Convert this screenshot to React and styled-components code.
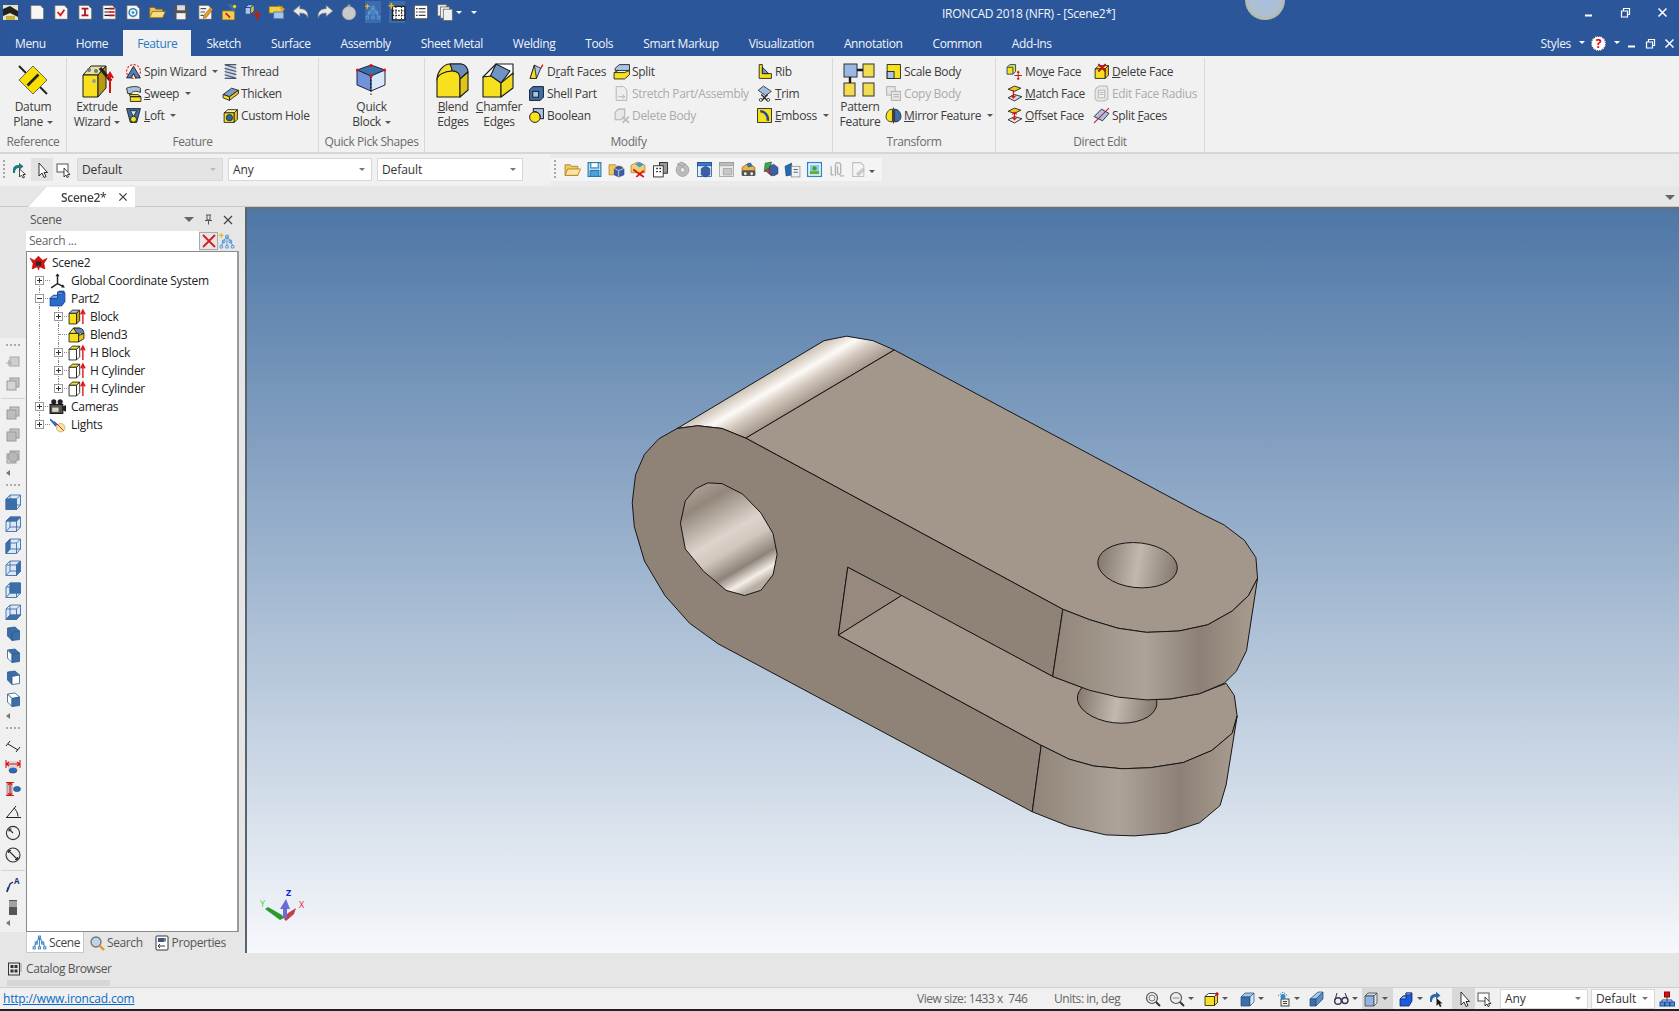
import React from "react";
import styled, { createGlobalStyle } from "styled-components";

const Global = createGlobalStyle`
  html, body { margin: 0; padding: 0; background: #e6e6e6; overflow: hidden; }
  #root { width: 1679px; height: 1011px; }
  * { box-sizing: border-box; }
`;

const font = `"Open Sans", "Noto Sans", "Liberation Sans", sans-serif`;
const Y = "#f7e11e", B = "#3c6ea8", LB = "#a9c4e6", K = "#1a1a1a", R = "#e01010", W = "#ffffff";

/* ---------- icon drawings ---------- */
const Cube = ({ f = Y, t = W, s = Y, st = K }) => (
  <g stroke={st} strokeWidth=".8" strokeLinejoin="round">
    <path d="M2 5.5 5.5 2.5H14.5L11.5 5.5Z" fill={t} />
    <path d="M2 5.5H11.5V14.5H2Z" fill={f} />
    <path d="M11.5 5.5 14.5 2.5V11.5L11.5 14.5Z" fill={s} />
  </g>
);
const Doc = ({ children, f = "#f6f6f6" }) => (
  <g>
    <path d="M2.5 2H11L14 5V14.5H2.5Z" fill={f} stroke="#555" strokeWidth=".7" />
    {children}
  </g>
);
const WireCube = ({ face }) => (
  <g stroke={B} strokeWidth=".9" strokeLinejoin="round">
    <path d="M1 5 5 1H15.5V11L11.5 15.5H1Z" fill="#dce8f6" />
    {face === "back" && <path d="M5 1H15.5V11H5Z" fill={B} />}
    {face === "bottom" && <path d="M1 15.5 5 11H15.5L11.5 15.5Z" fill={B} />}
    {face === "front" && <path d="M1 5H11.5V15.5H1Z" fill={B} />}
    {face === "top" && <path d="M1 5 5 1H15.5L11.5 5Z" fill={B} />}
    {face === "left" && <path d="M1 5 5 1V11L1 15.5Z" fill={B} />}
    {face === "right" && <path d="M11.5 5 15.5 1V11L11.5 15.5Z" fill={B} />}
    <path d="M1 5H11.5L15.5 1M11.5 5V15.5M5 1V11H15.5M5 11 1 15.5" fill="none" />
  </g>
);
const TiltCube = ({ a = B, b = B, c = B }) => (
  <g stroke="#2a5a90" strokeWidth=".8" strokeLinejoin="round">
    <path d="M2.5 2 10 1 14.5 5 7 6.5Z" fill={a} />
    <path d="M2.5 2V10L7 14.5V6.5Z" fill={b} />
    <path d="M7 6.5 14.5 5V13.5L7 14.5Z" fill={c} />
  </g>
);
const Gray = ({ d = 0 }) => (
  <g stroke="#9a9a9a" strokeWidth="1" fill="#c4c4c4">
    <rect x="5" y="2" width="9" height="9" />
    <rect x="2" y="5" width="9" height="9" fill={d ? "#d4d4d4" : "#bdbdbd"} />
    {d === 2 && <circle cx="8" cy="8" r="5" fill="#b8b8b8" />}
  </g>
);
const RedUp = () => <path d="M14 15V4M12 6l2-4 2 4" stroke={R} strokeWidth="1.3" fill="none" />;

const icons = {
  logo: <g><rect x="1" y="1" width="15" height="15" fill="#e8e2c0" /><path d="M1 5 8 2 16 7V13L8 9 1 12Z" fill="#222" /><path d="M4 12H13V16H4Z" fill="#c6b23a" /></g>,
  new: <Doc />,
  docCheck: <Doc><path d="M5 8l2.5 3L11 6" stroke={R} strokeWidth="1.6" fill="none" /></Doc>,
  docI: <Doc><path d="M5 5H11M8 5V11M5 11H11" stroke="#b01020" strokeWidth="1.6" fill="none" /></Doc>,
  docList: <Doc><path d="M4 5H8M4 8H8M4 11H8" stroke="#222" /><path d="M8 5H13M8 8H13M8 11H13" stroke="#b01020" strokeWidth="1.5" /></Doc>,
  docSwirl: <Doc><circle cx="8" cy="8.5" r="3.4" fill="none" stroke="#2f8cc0" strokeWidth="1.5" /><circle cx="8" cy="8.5" r="1.2" fill="#2f8cc0" /></Doc>,
  open: <g stroke="#8a6a10" strokeWidth=".7"><path d="M1.5 4H6L7 5.5H13V13H1.5Z" fill="#e9c45a" /><path d="M1.5 13 4 7.5H15.5L13 13Z" fill="#f8dc84" /></g>,
  save: <g><rect x="2" y="1.5" width="12" height="13" rx="1" fill="#555" /><rect x="4.5" y="2" width="7" height="4.5" fill="#ddd" /><rect x="4" y="9" width="8" height="5.5" fill="#f2f2f2" /></g>,
  editDoc: <Doc><path d="M4 5H9M4 8H8M4 11H7" stroke="#555" /><path d="M7 11 13 4l2 1.5L9 13 6.5 13.5Z" fill="#e8a020" stroke="#7a5010" strokeWidth=".5" /></Doc>,
  folderStar: <g><path d="M2 7H13V15H2Z" fill="#f0d050" stroke="#8a6a10" strokeWidth=".6" /><path d="M7 1 12 8 14 5 11 1Z" fill={B} /><path d="M5 9 9 13" stroke={R} strokeWidth="1.4" /><circle cx="13" cy="3" r="1.5" fill="#ffd000" /></g>,
  moveRed: <g><path d="M1 4 4 1.5H9L6 4ZM1 4H6V10H1Z" fill={LB} stroke="#1e4a90" strokeWidth=".8" /><path d="M6 4 9 1.5V7L6 10Z" fill="#f2c830" stroke="#1e4a90" strokeWidth=".8" /><path d="M11.5 7V15M7.5 11H15.5" stroke="#c02010" strokeWidth="1.6" /></g>,
  folderBlue: <g><path d="M1 3H13V9H1Z" fill="#f0d040" stroke="#8a7010" strokeWidth=".6" /><path d="M5 8H14V14H5Z" fill={LB} stroke={B} strokeWidth=".7" /><path d="M9 2 15 5 13 8Z" fill="#e8a020" /></g>,
  undo: <path d="M1 7 7 2V5C12 5 15 8 14 13 13 10 11 9 7 9V12Z" fill="#e8e8e8" stroke="#777" strokeWidth=".7" />,
  redo: <path d="M15 7 9 2V5C4 5 1 8 2 13 3 10 5 9 9 9V12Z" fill="#e8e8e8" stroke="#777" strokeWidth=".7" />,
  ball: <g><circle cx="8" cy="9" r="6" fill="#c9c9c9" stroke="#999" strokeWidth=".6" /><path d="M6 3 8 .8 10 3Z" fill="#aaa" /></g>,
  tree: <g fill="none" stroke="#5a9ad8" strokeWidth=".9"><path d="M8 4 5 8 3 12M8 4l3 4 2 4M8 4V12" /><circle cx="8" cy="4" r="1.3" /><circle cx="5" cy="8.5" r="1.3" /><circle cx="11" cy="8.5" r="1.3" /><circle cx="3" cy="13" r="1.3" /><circle cx="8" cy="13" r="1.3" /><circle cx="13" cy="13" r="1.3" /><path d="M3 1V5M1 3H5" stroke="#e8b820" strokeWidth="1.2" /></g>,
  film: <g><rect x="4" y="3" width="11" height="12" fill={W} stroke="#222" strokeWidth="1.2" /><path d="M7 3V15M12 3V15M4 7H15M4 11H15" stroke="#222" strokeDasharray="1.5 1" /><path d="M3 0V5M.5 2.5H5.5" stroke="#e8b820" strokeWidth="1.3" /></g>,
  listDoc: <g><rect x="2" y="2" width="12" height="12" rx="1" fill={W} stroke="#555" /><path d="M6 5H12M6 8H12M6 11H12M3.5 5H5M3.5 8H5M3.5 11H5" stroke="#444" /></g>,
  copies: <g stroke="#666" strokeWidth=".7" fill="#f0f0f0"><rect x="1.5" y="1.5" width="8" height="10" /><rect x="4" y="3.5" width="8" height="10" /><rect x="6.5" y="5.5" width="8" height="10" /></g>,

  spin: <g><circle cx="8" cy="8" r="6.5" fill="none" stroke={R} strokeDasharray="2 1.4" /><path d="M1.5 14 8 3l6.5 11H10L8 10 6 14Z" fill="#5a7db0" stroke={K} strokeWidth=".8" /></g>,
  sweep: <g stroke={K} strokeWidth=".8"><path d="M1.5 3C6 1 13 1 14.5 3V7C10 5 7 6 6 8H2.5Z" fill="#a8c0dd" /><path d="M4 9H12L15 11H5ZM5 11H15V15.5H5Z" fill={Y} /></g>,
  loft: <g stroke={K} strokeWidth=".8"><path d="M1.5 1.5H14.5L11 14.5H5Z" fill={B} /><path d="M5 3.5 8 9 11 3.5Z" fill="#dce8f6" /><circle cx="8" cy="11.5" r="2.8" fill={Y} /></g>,
  thread: <g stroke="#4c5870" strokeWidth="1.1" fill="none"><rect x="3" y="2" width="10" height="12" fill="#cdd6e0" stroke="none" /><path d="M2.5 1.5H13.5M2.5 1.5 13.5 5M2.5 5 13.5 8M2.5 8 13.5 11M2.5 11 13.5 14.5M2.5 14.5H13.5" /></g>,
  thicken: <g stroke={K} strokeWidth=".8"><path d="M1 9 9 3 15.5 5 7 11Z" fill="#7b9cc4" /><path d="M1 9 7 11V14.5L1 12Z" fill={Y} /><path d="M7 11 15.5 5V8L7 14.5Z" fill="#e8c820" /></g>,
  hole: <g><Cube f={Y} t="#fff2a0" s="#e8c820" /><circle cx="7" cy="10" r="3" fill="#2a66a8" stroke={K} strokeWidth=".7" /></g>,
  draft: <g stroke={K} strokeWidth=".8"><path d="M6 2 12 5 8 14.5H2Z" fill={LB} /><path d="M2 14.5 6 2 8 14.5Z" fill={Y} /><path d="M12 5 14 1.5" stroke={R} strokeWidth="1.2" /></g>,
  shell: <g stroke={K} strokeWidth=".9"><path d="M1.5 4.5 4.5 1.5H14.5V11.5L11.5 14.5H1.5Z" fill={B} /><rect x="4.5" y="6" width="5.5" height="5.5" fill={LB} /></g>,
  bool: <g stroke={K} strokeWidth=".9"><rect x="5" y="1.5" width="9.5" height="9.5" fill={LB} /><circle cx="6.5" cy="9.5" r="5" fill={Y} /><path d="M5.5 4.5A5 5 0 0 1 11.5 9.5" fill="none" /></g>,
  split: <g stroke={K} strokeWidth=".8"><path d="M2 5 6 1.5H15.5V7H2Z" fill={LB} /><path d="M1 9H11L15.5 7V11L11 15H1Z" fill={Y} /><path d="M1 9 5 7" /></g>,
  stretch: <g stroke="#b4b4b4" strokeWidth=".9" fill="#eee"><path d="M3 1.5H10L13 4.5V14.5H3Z" /><path d="M5 11H11M9 9l2 2-2 2" fill="none" /></g>,
  delBody: <g stroke="#b4b4b4" fill="#e8e8e8"><path d="M2 5 5 2H11V9L8 12H2Z" /><path d="M9 9 15 15M15 9 9 15" stroke="#bbb" strokeWidth="1.6" /></g>,
  rib: <g stroke={K} strokeWidth=".8"><path d="M3 1.5H6V10H14.5V14.5H3Z" fill={Y} /><path d="M6 4 12 10H6Z" fill="#6f92bf" /></g>,
  trim: <g stroke={K} strokeWidth=".7"><path d="M2 5 7 1 14.5 6 9 10Z" fill="#9fbde2" /><path d="M5 9 11 15M11 9 5 15" stroke="#222" strokeWidth="1.2" /><circle cx="4.5" cy="14" r="1.4" fill="#eee" /><circle cx="11.5" cy="14" r="1.4" fill="#eee" /></g>,
  emboss: <g stroke={K} strokeWidth=".8"><rect x="1.5" y="1.5" width="13" height="13" fill={Y} /><path d="M4 4C8 4 12 8 11 13" stroke="#1e4a90" strokeWidth="2.4" fill="none" /></g>,
  scale: <g stroke={K} strokeWidth=".8"><rect x="2" y="1.5" width="12.5" height="13" fill={Y} /><rect x="2" y="8" width="6.5" height="6.5" fill={LB} /></g>,
  copyBody: <g stroke="#b4b4b4" fill="#e6e6e6"><rect x="1.5" y="1.5" width="8" height="8" /><rect x="6" y="6" width="8.5" height="8.5" /><path d="M8 9H13M8 11H13" /></g>,
  mirror: <g stroke={K} strokeWidth=".8"><path d="M7 2C3 2 1 6 1 9 1 12 3 14 7 14Z" fill={Y} /><path d="M9 2C13 2 15 6 15 9 15 12 13 14 9 14Z" fill={B} /><path d="M8 .5V15.5" stroke="#222" /></g>,
  moveF: <g><path d="M1 4 3.5 1.5H9V8L6.5 10.5H1Z" fill={Y} stroke="#1e4a90" strokeWidth=".9" /><path d="M1 4H6.5V10.5" fill="none" stroke="#1e4a90" strokeWidth=".9" /><path d="M11.5 8V15.5M8 11.7H15M10.5 9l1-1.2 1 1.2M10.5 14.5l1 1 1-1" stroke="#c02010" fill="none" strokeWidth="1" /></g>,
  matchF: <g stroke={K} strokeWidth=".8"><path d="M2 4 8 1 14 3 8 6Z" fill="#f0c820" /><path d="M2 12 8 9 15 11 8 15Z" fill="#cfd8e6" /><path d="M7 5V12M5 10l2 2 2-2" stroke={R} strokeWidth="1.2" fill="none" /></g>,
  offsetF: <g stroke={K} strokeWidth=".8"><path d="M2 4 8 1 14 3 8 6Z" fill="#f0c820" /><path d="M2 12 8 9 15 11 8 15Z" fill="#e8e8e8" /><path d="M8 5V12M6 7l2-2 2 2M6 10l2 2 2-2" stroke={R} strokeWidth="1.1" fill="none" /></g>,
  delF: <g><Cube f={Y} t="#ffee80" s="#e8c820" /><path d="M5 1 12 8M12 1 5 8" stroke="#c01010" strokeWidth="1.8" /></g>,
  radiusF: <g stroke="#b8b8b8" fill="#e8e8e8"><path d="M3 3 6 1H13L14 4V13L11 15H4L2 13V5Z" /><path d="M5 5H11V12H5ZM6 7H10M6 9H10" fill="#f2f2f2" /></g>,
  splitF: <g stroke={K} strokeWidth=".8"><path d="M1 9 8 2 15 6 9 13Z" fill={LB} /><path d="M1 15 15 1" stroke="#c02040" strokeWidth="1.1" /></g>,

  runCursor: <g><path d="M1 8C1 4 4 3 7 3V.8L11.5 4.5 7 8V6C5 6 3 7 3 11H1Z" fill="#1c7a80" /><path d="M7.5 7V15L9.5 13 11 16 12.5 15.3 11 12.5H13.5Z" fill={W} stroke={K} strokeWidth=".8" /></g>,
  cursor: <path d="M5 1V14L8 11 10 15.5 12 14.5 10 10.5H13.5Z" fill={W} stroke={K} strokeWidth=".9" />,
  boxCursor: <g><rect x="1" y="2" width="11" height="8" fill={W} stroke="#555" /><path d="M8 6V15L10 13 11 15.5 12.5 15 11.5 12.5H14Z" fill={W} stroke={K} strokeWidth=".8" /></g>,

  folderY: <g stroke="#b08020" strokeWidth=".8"><path d="M1 3.5H6L7 5H13V13.5H1Z" fill="#f0c860" /><path d="M1 13.5 3.5 7.5H15.5L13 13.5Z" fill="#fbe3a0" /></g>,
  saveB: <g stroke="#2a7ab0"><rect x="2" y="1.5" width="12" height="13" fill="#b4dcf4" strokeWidth="1.1" /><rect x="4.5" y="1.5" width="7" height="5" fill={W} /><rect x="4" y="9" width="8" height="5.5" fill="#4aa3d8" /></g>,
  folderCube: <g><path d="M1 3.5H7L8 5H13V13H1Z" fill="#f0c860" stroke="#a88020" strokeWidth=".7" /><path d="M6 7 10 5 15 7V13L10 15 6 13Z" fill="#3c5ea8" stroke="#1e3a80" strokeWidth=".6" /><path d="M6 7 10 9 15 7M10 9V15" stroke={W} strokeWidth=".6" fill="none" /></g>,
  sheetX: <g><path d="M1 4 7 1 14 4V11H1Z" fill="#f2d070" stroke="#a88020" strokeWidth=".7" /><path d="M5 3 9 1 13 3 9 6Z" fill="#3c9ad8" /><path d="M3 8 13 15M13 9 6 15" stroke={R} strokeWidth="1.6" /></g>,
  pages: <g stroke={K} strokeWidth=".8"><rect x="7" y="1.5" width="7.5" height="10" fill="#999" /><rect x="1.5" y="4.5" width="9" height="10.5" fill={W} /><path d="M4 7H5.5M7 7H8.5M4 10H5.5M7 10H8.5" strokeWidth="1.4" /></g>,
  gearG: <g fill="#bcbcbc" stroke="#999" strokeWidth=".7"><circle cx="8" cy="8.5" r="6" /><circle cx="8" cy="8.5" r="2.3" fill="#e8e8e8" /><path d="M3 3 7 1 11 3 8 5Z" /></g>,
  tableB: <g stroke="#1e4a90" strokeWidth=".7"><rect x="1.5" y="1.5" width="13" height="13" fill="#e4eef8" /><rect x="1.5" y="1.5" width="13" height="3" fill="#3c78c8" /><path d="M5 7 9 5 13 7V13L9 15 5 13Z" fill="#3c5ea8" /></g>,
  tableG: <g stroke="#999" strokeWidth=".7"><rect x="1.5" y="1.5" width="13" height="13" fill="#ececec" /><rect x="1.5" y="1.5" width="13" height="3" fill="#bdbdbd" /><path d="M5 7H13V13H5Z" fill="#c8c8c8" /></g>,
  folderCar: <g><path d="M2 6 8 2 14 6V9H2Z" fill="#e8b840" stroke="#806010" strokeWidth=".7" /><path d="M6 3 10 1.5 12 5 8 6Z" fill={B} /><rect x="1.5" y="9" width="13" height="5" rx="1" fill="#555" /><circle cx="5" cy="12" r="1.3" fill="#eee" /><circle cx="11" cy="12" r="1.3" fill="#eee" /></g>,
  greenBlue: <g stroke="#333" strokeWidth=".5"><path d="M3 2 9 1 7 9 2 10Z" fill="#2fb04a" /><path d="M3 9 9 14 12 11 6 7Z" fill="#e03040" /><path d="M7 5 11 3 15 6V12L11 14 7 12Z" fill="#3c5ea8" /></g>,
  docBlue: <g><path d="M1 5 7 2 8 13 2 14Z" fill="#1f6cb0" stroke="#14406c" strokeWidth=".6" /><rect x="7" y="5" width="8" height="10" fill="#eef2f6" stroke="#888" strokeWidth=".7" /><path d="M9 8H13M9 10.5H13" stroke="#666" /></g>,
  picture: <g><rect x="1.5" y="1.5" width="13" height="13" fill={W} stroke="#2e86c8" strokeWidth="1.2" /><rect x="3.5" y="3.5" width="9" height="6" fill="#8cc8f0" /><circle cx="8" cy="7" r="2" fill="#4a9a30" /><rect x="3.5" y="9.5" width="9" height="3" fill="#5ab040" /></g>,
  clip: <g fill="none" stroke="#b4b4b4" strokeWidth="1.3"><path d="M7 14V4A2.5 2.5 0 0 1 12 4V11A1.5 1.5 0 0 1 9 11V5" /><path d="M3 5V13H5M11 14H15" /></g>,
  docPen: <g><path d="M2.5 1.5H10L13 4.5V14.5H2.5Z" fill="#f4f4f4" stroke="#c0c0c0" /><path d="M6 12 12 7l1.5 1.5L8 14Z" fill="#cccccc" stroke="#aaa" strokeWidth=".5" /></g>,

  scene: <g stroke="#c00000" fill="#d81010" strokeWidth=".6"><path d="M0 4 4 6 8 2 12 6 16 4 13 9 14 14 9 12 8 15 7 12 2 14 3 9Z" /><rect x="5.5" y="7" width="5" height="4" fill="#2a2a2a" stroke="none" /></g>,
  axes: <g stroke="#222" strokeWidth="1.3" fill="none"><path d="M8 2V11M8 11 14 14M8 11 2 15" /><path d="M6 4 8 1.5 10 4M11.5 14.5 15 14.5 13 11.5" fill="#222" stroke="none" /></g>,
  part: <g stroke="#123a80" strokeWidth=".7"><path d="M1 8 4 5H8V2L10 1H14L15 3V11L12 15H1Z" fill="#2a6ccc" /><path d="M4 5H8V8H1ZM8 2H14L12 4H8Z" fill="#7aaae8" /></g>,
  treeBlock: <g stroke={K} strokeWidth=".8"><path d="M1 5 4 2H11L8 5Z" fill={LB} /><path d="M1 5H8V15H1Z" fill={Y} /><path d="M8 5 11 2V12L8 15Z" fill="#c8a010" /><RedUp /></g>,
  treeBlend: <g stroke={K} strokeWidth=".8"><path d="M1 7 5 2H11L7 7Z" fill="#f2df40" /><path d="M5 2H11C14 2 15 5 15 7L13 8C13 5 10 7 10 9Z" fill="#6a86ad" /><path d="M1 7H10V15H1Z" fill={Y} /><path d="M10 9 15 7V12L10 15Z" fill="#e8c820" /></g>,
  treeH: <g stroke={K} strokeWidth=".8"><path d="M1 5 4 2H11L8 5Z" fill={Y} /><path d="M1 5H8V15H1Z" fill={W} /><path d="M8 5 11 2V12L8 15Z" fill={W} /><RedUp /></g>,
  cameras: <g><circle cx="4.5" cy="3.5" r="2.4" fill="#222" /><circle cx="10.5" cy="3.5" r="2.4" fill="#222" /><rect x="1" y="6" width="12" height="8.5" fill="#555" stroke="#111" /><path d="M3 9H9V13H3Z" fill="#e0d6b8" /><path d="M13 8 16 6.5V13L13 11.5Z" fill="#222" /></g>,
  lights: <g><path d="M1 2 8 8 6 10 1 4Z" fill="#2a6ac0" /><circle cx="11" cy="11" r="4" fill="#f4e4a8" stroke="#c8a860" strokeWidth=".7" /><path d="M5 5 14 14" stroke={R} strokeWidth=".8" /></g>,
  sceneTab: <g fill="none" stroke="#4a8ac8" strokeWidth="1"><path d="M8 3 5 8 3 12M8 3l3 5 2 4M8 3V12" /><rect x="7" y="2" width="2" height="2" /><rect x="4" y="7.5" width="2" height="2" /><rect x="10" y="7.5" width="2" height="2" /><rect x="2" y="12" width="2" height="2" /><rect x="7" y="12" width="2" height="2" /><rect x="12" y="12" width="2" height="2" /></g>,
  search: <g><circle cx="7" cy="7" r="5" fill="#bcd4ec" stroke="#777" strokeWidth="1.3" /><path d="M10.5 10.5 15 15" stroke="#e09820" strokeWidth="2.4" /></g>,
  props: <g><rect x="2" y="1" width="12" height="14" rx="1" fill={W} stroke="#333" /><rect x="4" y="3" width="6" height="4" fill="#3a5a80" /><path d="M11 3V6.5" stroke="#3a5a80" strokeWidth="1.5" /><path d="M4 11H11M6 9 4 11 6 13" stroke="#333" fill="none" /></g>,
  catalog: <g fill="none" stroke="#333"><rect x="1.5" y="2" width="11" height="12" /><path d="M14 2V11" stroke="#999" /><rect x="4" y="4.5" width="2" height="2" fill="#333" /><rect x="8" y="4.5" width="2" height="2" fill="#333" /><rect x="4" y="9" width="2" height="2" fill="#333" /><rect x="8" y="9" width="2" height="2" fill="#333" /></g>,

  g1: <g stroke="#a8a8a8" fill="#cfcfcf"><rect x="5" y="3" width="9" height="9" /><path d="M1 9H7M4 6V12" stroke="#aaa" strokeWidth="1.2" /></g>,
  g2: <Gray d={1} />,
  g3: <Gray d={0} />,
  g4: <Gray d={2} />,
  cFront: <WireCube face="front" />,
  cTop: <WireCube face="top" />,
  cLeft: <WireCube face="left" />,
  cRight: <WireCube face="right" />,
  cBack: <WireCube face="back" />,
  cBottom: <WireCube face="bottom" />,
  t1: <TiltCube />,
  t2: <TiltCube b="#fff" />,
  t3: <TiltCube c="#fff" />,
  t4: <TiltCube a="#fff" b="#fff" />,
  dim: <g stroke="#222" fill="none"><path d="M3 7 13 13M1 9 5 4M11 15 15 10" /></g>,
  dimH: <g><rect x="3" y="2" width="10" height="8" fill="#d8d8d8" /><path d="M1 1V9M15 1V9M1 5H15M1 5 4 3M1 5 4 7M15 5 12 3M15 5 12 7" stroke={R} strokeWidth="1.1" fill="none" /><ellipse cx="8" cy="11.5" rx="4" ry="2.6" fill="#1e6ad0" stroke="#444" strokeWidth=".6" /></g>,
  dimV: <g><rect x="2" y="2" width="5" height="12" fill="#c8c8c8" stroke="#555" strokeWidth=".5" /><path d="M1 1.5H9M1 14.5H9M5 1.5V14.5M5 1.5 3 4M5 1.5 7 4M5 14.5 3 12M5 14.5 7 12" stroke={R} strokeWidth="1.1" fill="none" /><ellipse cx="12" cy="8" rx="3.5" ry="2.6" fill="#1e6ad0" stroke="#444" strokeWidth=".6" /></g>,
  ang: <g stroke="#222" fill="none"><path d="M1 14.5H16M2 14 11 3" /><path d="M9 5C11 7 13 10 13 13.5" /></g>,
  rad: <g fill="none" stroke="#333" strokeWidth="1.1"><circle cx="8" cy="8" r="6.6" /><path d="M8 8 4 4M4 4H6.5M4 4V6.5" /></g>,
  dia: <g fill="none" stroke="#333" strokeWidth="1.1"><circle cx="8" cy="8" r="7" /><path d="M3.5 3.5 12.5 12.5M3.5 3.5H6M3.5 3.5V6M12.5 12.5H10M12.5 12.5V10" /></g>,
  leader: <g><path d="M2 15 5 7 8 5" stroke="#1e3a70" strokeWidth="1.5" fill="none" /><path d="M1 15 2.5 10 4.5 11Z" fill="#1e3a70" /><text x="9" y="7" fontFamily={font} fontSize="8" fontWeight="700" fill="#1e3a70">A</text></g>,
  hatch: <g><rect x="4" y="1" width="8" height="15" fill="#555" /><path d="M4 3H12M4 5H12M4 7H12" stroke="#eee" /></g>,

  zoomAll: <g><circle cx="7" cy="7" r="5.5" fill="#eee" stroke="#555" strokeWidth="1.2" /><circle cx="7" cy="7" r="3" fill="none" stroke="#777" /><path d="M11 11 15 15" stroke="#333" strokeWidth="2" /></g>,
  zoomP: <g><circle cx="7" cy="7" r="5.5" fill="#eee" stroke="#555" strokeWidth="1.2" /><path d="M4 7H10" stroke="#888" /><path d="M11 11 15 15" stroke="#333" strokeWidth="2" /></g>,
  cubeStar: <g><Cube f={Y} t="#fff" s="#f0d020" /><path d="M14 1V5M12 3H16" stroke={R} strokeWidth="1.2" /></g>,
  viewCube: <g stroke="#1e4a80" strokeWidth=".7"><path d="M2 6 6 2H15L11 6Z" fill="#a8c4e4" /><path d="M2 6H11V15H2Z" fill={B} /><path d="M11 6 15 2V11L11 15Z" fill="#d8e6f4" /></g>,
  cam: <g><path d="M3 5 8 1 13 5" stroke="#2a8ad0" strokeDasharray="1.5 1" fill="none" /><circle cx="8" cy="5.5" r="2.5" fill="#2a8ad0" /><rect x="6" y="8" width="8" height="7" fill="#eee" stroke="#444" /><path d="M8 10.5H12M8 12.5H12" stroke="#444" /></g>,
  slab: <g stroke="#1e4a80" strokeWidth=".7"><path d="M2 8 10 1 15 1 8 8Z" fill="#a8c4e4" /><path d="M2 8H8V15H2Z" fill={B} /><path d="M8 8 15 1V8L8 15Z" fill="#5f8cc0" /></g>,
  glasses: <g fill="none" stroke="#335" strokeWidth="1.4"><circle cx="5" cy="10" r="3.3" /><circle cx="12" cy="9.5" r="3" /><path d="M2 9 4 2M14.5 8 12 2" strokeWidth="1" /></g>,
  cubeSel: <g stroke="#444" strokeWidth=".8"><path d="M2 5 5 2H14L11 5Z" fill="#c8d8ee" /><path d="M2 5H11V15H2Z" fill="#93b4de" /><path d="M11 5 14 2V12L11 15Z" fill="#dce8f6" /></g>,
  part2: <g stroke="#0a2a70" strokeWidth=".8"><path d="M2 8 5 5H8V2H14V10L11 15H2Z" fill="#1e5ae0" /><path d="M5 5H8V8H2ZM8 2H14L12 4H8Z" fill="#8ab4f0" /></g>,
  runCursor2: <g><path d="M1 8C1 4 4 3 7 3V.8L11.5 4.5 7 8V6C5 6 3 7 3 11H1Z" fill="#2a6aa8" /><path d="M7.5 7V15L9.5 13 11 16 12.5 15.3 11 12.5H13.5Z" fill={K} /></g>,
  net: <g stroke="#1e4a90" fill="none"><rect x="5.5" y="1" width="5" height="5" fill="#d81010" stroke="#900" /><path d="M8 6V9M3 11V9H13V11M8 9V11" /><rect x="1" y="11" width="4.5" height="4" fill="#4a90d8" /><rect x="6" y="11" width="4.5" height="4" fill="#4a90d8" /><rect x="11" y="11" width="4.5" height="4" fill="#4a90d8" /></g>,
};

const bigIcons = {
  datum: <g><path d="M3 3 31 31" stroke="#222" strokeWidth="2" /><path d="M17 3 31 17 17 31 3 17Z" fill="#fae000" stroke="#666" strokeWidth="1" /><path d="M11.5 22.5 22.5 11.5" stroke="#222" strokeWidth="2.6" /></g>,
  extrude: <g><path d="M3 12 11 3H26L18 12Z" fill="#e8e0a0" stroke={K} /><path d="M3 12H18V34H3Z" fill={Y} stroke={K} /><path d="M18 12 26 3V25L18 34Z" fill="#b89a10" stroke={K} /><circle cx="9" cy="7" r="2" fill="#777" /><circle cx="16" cy="8" r="2" fill="#777" /><circle cx="14" cy="18" r="2" fill="#999" /><path d="M20 5 31 18" stroke="#222" strokeWidth="3.4" /><path d="M30 12V30M27 15 30 10 33 15" stroke={R} strokeWidth="2" fill="none" /></g>,
  quick: <g><path d="M16 2 30 7 16 13 2 7Z" fill={B} stroke="#224" /><path d="M2 7 16 13V28L2 22Z" fill="#6f92d8" stroke="#224" /><path d="M30 7 16 13V28L30 22Z" fill="#d8e6f8" stroke="#224" /><path d="M16 13V32" stroke="#111" strokeDasharray="2 1.5" /><circle cx="16" cy="2.5" r="1.6" fill={R} /><circle cx="2.5" cy="7" r="1.6" fill={R} /><circle cx="29.5" cy="7" r="1.6" fill={R} /><circle cx="16" cy="13" r="1.6" fill={R} /></g>,
  blend: <g stroke={K} strokeWidth="1.1" strokeLinejoin="round"><path d="M1 17C1 8 8 1 14 1H25C29 1 31 5 31 9L24 15C24 8 21 8 17 8 9 8 1 12 1 17Z" fill="#f2df30" /><path d="M14 1H25C29 1 32 5 32 9L24 16C24 10 20 8 16 8 16 5 15 3 14 1Z" fill="#6a8cb8" /><path d="M1 17C1 12 9 8 16 8 21 8 24 11 24 16V34H1Z" fill={Y} /><path d="M24 16 32 9V27L24 34Z" fill="#e0c418" /></g>,
  chamfer: <g stroke={K} strokeWidth="1.1" strokeLinejoin="round"><path d="M1 14 14 1H31V12L24 19 8 14Z" fill={W} /><path d="M14 1 8 14 19 20 28 8Z" fill="#6f94c4" /><path d="M1 14 9 13 19 20V34H1Z" fill={Y} /><path d="M19 20 31 10V25L19 34Z" fill="#f2dc20" /></g>,
  pattern: <g stroke="#333" strokeWidth="1"><rect x="1" y="1" width="13" height="13" fill="#9ab8e4" /><rect x="20" y="1" width="11" height="13" fill="#f4dc50" /><rect x="1" y="20" width="11" height="13" fill="#f4dc50" /><rect x="20" y="20" width="11" height="13" fill="#f4dc50" /><path d="M14 7H20M7 14V20" stroke={K} strokeWidth="2.4" /></g>,
};

/* ---------- styled parts ---------- */
const Shell = styled.div`
  width: 1679px; height: 1011px; display: flex; flex-direction: column;
  background: #e6e6e6; font-family: ${font}; font-size: 12px; color: #333; overflow: hidden; letter-spacing: -0.3px;
`;
const Svg = styled.svg`
  display: block; flex: none; width: ${(p) => p.$s || 16}px; height: ${(p) => p.$s || 16}px; overflow: visible;
`;
const Ic = ({ n, s }) => <Svg $s={s} viewBox="0 0 16 16">{icons[n]}</Svg>;
const Big = ({ n, w = 34 }) => <Svg $s={w} viewBox="0 0 34 34">{bigIcons[n]}</Svg>;

const TitleBar = styled.div`
  height: 30px; background: #2b579a; display: flex; align-items: center; position: relative; overflow: hidden; flex: none;
`;
const Qat = styled.div`
  flex: 0 0 942px; display: flex; align-items: center; padding-left: 2px; padding-bottom: 6px; height: 30px; gap: 8px;
`;
const QatSlot = styled.div`
  flex: none; width: 16px; height: 22px; display: flex; align-items: center; justify-content: center; margin-left: ${(p) => p.$ml || 0}px;
  background: ${(p) => (p.$on ? "#3c6cab" : "transparent")};
`;
const Caret = styled.span`
  flex: none; width: 0; height: 0; margin: ${(p) => p.$m || "0"};
  border-left: 3px solid transparent; border-right: 3px solid transparent;
  border-top: 3px solid ${(p) => p.$c || "#555"};
`;
const InlineCaret = styled(Caret)`
  display: inline-block; vertical-align: 2px; margin-left: 1px;
`;
const HeadCaret = styled(Caret)`
  border-left-width: 5px; border-right-width: 5px; border-top-width: 5px;
`;
const Title = styled.div`
  color: #f2f5fa; font-size: 12px; white-space: nowrap; letter-spacing: -0.25px; padding-bottom: 4px;
`;
const Orb = styled.div`
  position: absolute; left: 1245px; top: -20px; width: 40px; height: 40px; border-radius: 50%;
  background: radial-gradient(circle at 50% 50%, #a6bfe0 0%, #aebfd0 55%, #b8b47e 88%, #bcae6c 100%);
`;
const WinBtns = styled.div`
  margin-left: ${(p) => p.$ml || "auto"}; display: flex; align-items: center; gap: ${(p) => p.$gap}px; padding-right: ${(p) => p.$pr}px; padding-bottom: ${(p) => p.$pb || 0}px;
`;
const WinGlyph = ({ kind, s = 11, c = "#fff" }) => (
  <Svg $s={s} viewBox="0 0 11 11" fill="none" stroke={c} strokeWidth="1.2">
    {kind === "min" && <path d="M2 8.5H9" strokeWidth="2" />}
    {kind === "max" && <path d="M1.5 4H7.5V10H1.5ZM3.5 4V1.5H9.5V7.5H7.5" />}
    {kind === "x" && <path d="M1.5 1.5 9.5 9.5M9.5 1.5 1.5 9.5" strokeWidth="1.5" />}
  </Svg>
);

const TabBar = styled.div`
  height: 26px; background: #2b579a; display: flex; align-items: flex-end; flex: none;
`;
const Tab = styled.div`
  height: 26px; padding: 0 ${(p) => (p.$on ? 14 : 15)}px; display: flex; align-items: center; white-space: nowrap;
  letter-spacing: -0.38px; font-size: 12px;
  color: ${(p) => (p.$on ? "#2b79c2" : "#f0f4fa")};
  background: ${(p) => (p.$on ? "#f1f1f1" : "transparent")};
`;
const TabRight = styled.div`
  margin-left: auto; display: flex; align-items: center; height: 26px; color: #f0f4fa;
`;
const HelpBadge = styled.span`
  width: 15px; height: 15px; border-radius: 50%; background: #fff; color: #e00000; border: 1px dotted #444;
  font-weight: 700; font-size: 12px; line-height: 13px; text-align: center; margin-left: 6px;
`;

const Ribbon = styled.div`
  height: 98px; flex: none; background: #f1f1f1; display: flex; border-bottom: 2px solid #d6d6d6; padding-top: 2px;
`;
const Group = styled.div`
  flex: 0 0 ${(p) => p.$w}px; min-width: 0; display: flex; flex-direction: column;
  border-right: 1px solid #d9d9d9; height: 94px;
`;
const GroupBody = styled.div`
  height: 77px; padding: 2px 0 0 ${(p) => p.$pl || 0}px; display: flex; justify-content: ${(p) => (p.$c ? "center" : "flex-start")};
`;
const GroupLabel = styled.div`
  text-align: center; color: #6c6c6c; line-height: 14px; letter-spacing: -0.4px; white-space: nowrap;
`;
const LargeBtn = styled.div`
  flex: 0 0 ${(p) => p.$w}px; min-width: 0; display: flex; flex-direction: column; align-items: center; padding-top: 3px; color: #3c3c3c;
`;
const LargeText = styled.div`
  margin-top: 2px; text-align: center; line-height: 15px; letter-spacing: -0.3px; white-space: nowrap;
`;
const Col = styled.div`
  flex: 0 0 ${(p) => p.$w}px; min-width: 0; margin-left: ${(p) => p.$ml || 0}px; display: flex; flex-direction: column; padding-left: 1px;
`;
const SmallBtn = styled.div`
  height: 22px; display: flex; align-items: center; gap: 2px; white-space: nowrap; letter-spacing: -0.33px;
  color: ${(p) => (p.$off ? "#ababab" : "#3c3c3c")};
`;
const Small = ({ i, t, arrow, off }) => (
  <SmallBtn $off={off}>
    <Ic n={i} s={17} />
    <span>{t}</span>
    {arrow && <Caret $m="0 0 0 4px" />}
  </SmallBtn>
);

const Strip = styled.div`
  height: 33px; flex: none; display: flex; background: #ebebeb;
`;
const StripLeft = styled.div`
  flex: 0 0 550px; height: 31px; background: #f1f1f1; display: flex; align-items: center; padding-left: 3px;
`;
const Grip = styled.div`
  flex: none; width: 2px; height: 20px; margin: ${(p) => p.$m || "0"};
  background: repeating-linear-gradient(to bottom, #a8a8a8 0 2px, transparent 2px 4px);
`;
const StripBtn = styled.div`
  flex: 0 0 22px; height: 23px; margin-left: ${(p) => p.$ml || 0}px; display: flex; align-items: center; justify-content: center;
  background: ${(p) => (p.$on ? "#e2e2e2" : "transparent")};
`;
const Combo = styled.div`
  flex: 0 0 ${(p) => p.$w}px; height: ${(p) => p.$h || 23}px; display: flex; align-items: center; justify-content: space-between;
  padding: 0 6px 0 4px; margin-left: ${(p) => p.$ml || 0}px; border: 1px solid #d8d8d8; letter-spacing: -0.1px;
  background: ${(p) => (p.$off ? "#e4e4e4" : "#fff")}; color: #333;
`;
const StripRight = styled.div`
  flex: 0 0 332px; height: 23px; margin-top: 4px; background: #f4f4f4; display: flex; align-items: center; padding-left: 3px;
`;

const DocTabs = styled.div`
  height: 20px; flex: none; display: flex; align-items: flex-start; background: #e6e6e6; padding-left: 28px; border-bottom: 1px solid #c8c8c8;
`;
const DocTabWrap = styled.div`
  filter: drop-shadow(0 0 0.6px #8c8c8c);
`;
const DocTab = styled.div`
  width: 107px; height: 20px; background: #fff; display: flex; align-items: center; padding-left: 33px; font-weight: 600; color: #444;
  clip-path: polygon(0 100%, 18px 0, 100% 0, 100% 100%);
`;
const DocClose = styled.span`
  margin-left: 12px; display: flex;
`;
const EndTri = styled.span`
  margin-left: auto; margin-right: 4px; margin-top: 8px; width: 0; height: 0; border-left: 5px solid transparent; border-right: 5px solid transparent; border-top: 5px solid #666;
`;

const Work = styled.div`
  height: 746px; flex: none; display: flex; background: #e6e6e6;
`;
const Dock = styled.div`
  flex: 0 0 245px; display: flex;
`;
const Rail = styled.div`
  flex: 0 0 26px; margin-top: 131px; height: 594px; background: #f0f0f0; display: flex; flex-direction: column; align-items: center;
`;
const RailBtn = styled.div`
  flex: 0 0 22px; width: 26px; display: flex; align-items: center; justify-content: center; padding-right: 1px;
`;
const RailGrip = styled.div`
  flex: 0 0 13px; width: 14px; display: flex; align-items: center; justify-content: center;
  &::before { content: ""; width: 14px; height: 2px; background: repeating-linear-gradient(to right, #aaa 0 2px, transparent 2px 4px); }
`;
const RailSep = styled.div`
  flex: 0 0 ${(p) => p.$h}px; width: 24px; display: flex; align-items: center;
  &::before { content: ""; width: 24px; height: 1px; background: #d4d4d4; }
`;
const RailMore = styled.div`
  flex: 0 0 10px; width: 26px; display: flex; align-items: center; padding-left: 6px;
  &::before { content: ""; border-top: 3px solid transparent; border-bottom: 3px solid transparent; border-right: 4px solid #777; }
`;
const Panel = styled.div`
  flex: 0 0 213px; display: flex; flex-direction: column;
`;
const PanelHead = styled.div`
  height: 24px; padding: 1px 6px 0 4px; display: flex; align-items: center; color: #555;
`;
const HeadIcons = styled.div`
  margin-left: auto; display: flex; align-items: center; gap: 9px;
`;
const SearchRow = styled.div`
  height: 20px; display: flex; align-items: center;
`;
const SearchBox = styled.div`
  flex: 0 0 173px; height: 20px; background: #fff; padding-left: 3px; line-height: 19px; color: #666;
`;
const XBtn = styled.div`
  flex: 0 0 19px; height: 18px; margin: 1px 0; background: #e6e6e6; border: 1px solid #aaa; display: flex; align-items: center; justify-content: center;
`;
const TreeBox = styled.div`
  height: 681px; background: #fff; border: 1px solid #8a8a8a; border-right: 2px solid #9c9c9c; padding-top: 1px;
`;
const TreeRow = styled.div`
  height: 18px; display: flex; align-items: center; padding-left: 3px; color: #222; white-space: nowrap;
`;
const Cell = styled.div`
  flex: 0 0 19px; height: 18px; position: relative; display: flex; align-items: center; justify-content: center;
  &::before {
    content: ""; display: ${(p) => (p.$v ? "block" : "none")}; position: absolute; left: 9px;
    top: ${(p) => (p.$v === "start" ? "9px" : "0")}; height: ${(p) => (p.$v === "end" || p.$v === "start" ? "9px" : "18px")};
    border-left: 1px dotted #888;
  }
  &::after {
    content: ""; display: ${(p) => (p.$h ? "block" : "none")}; position: absolute; left: 10px; top: 9px; width: 10px; border-top: 1px dotted #888;
  }
`;
const Expander = styled.span`
  position: relative; z-index: 1; width: 9px; height: 9px; border: 1px solid #999; background: #fff; display: block;
  &::before { content: ""; position: absolute; left: 1px; top: 3px; width: 5px; height: 1px; background: #333; }
  &::after { content: ""; display: ${(p) => (p.$open ? "none" : "block")}; position: absolute; left: 3px; top: 1px; width: 1px; height: 5px; background: #333; }
`;
const TreeLabel = styled.span`
  margin-left: 5px;
`;
const PanelTabs = styled.div`
  height: 21px; display: flex; align-items: center; color: #555; letter-spacing: -0.4px;
`;
const PTab = styled.div`
  display: flex; align-items: center; gap: ${(p) => p.$g || 2}px; height: 21px; margin-left: ${(p) => p.$ml || 0}px; padding: 0 ${(p) => (p.$on ? 4 : 0)}px;
  ${(p) => p.$on && "background:#fff; border:1px solid #c8c8c8; border-top:none; width:58px; color:#444;"}
`;

const View = styled.div`
  flex: 1; position: relative; overflow: hidden; border-left: 2px solid #59636c; border-top: 2px solid #66717a;
  background: linear-gradient(to bottom, #4e77a6 0%, #f6f8fb 100%);
`;
const PartSvg = styled.svg`
  position: absolute; left: 373px; top: 111px; width: 640px; height: 540px;
  * { vector-effect: non-scaling-stroke; }
`;
const Triad = styled.svg`
  position: absolute; left: 3px; top: 676px; width: 62px; height: 44px;
`;

const Catalog = styled.div`
  height: 34px; flex: none; padding: 8px 0 0 7px; display: flex; flex-direction: column; background: #e6e6e6;
`;
const CatalogRow = styled.div`
  display: flex; align-items: center; gap: 3px; height: 15px; color: #555; letter-spacing: -0.4px;
`;
const CatalogBar = styled.div`
  width: 103px; height: 6px; margin-top: 4px; background: #d6d6d6;
`;
const Status = styled.div`
  height: 22px; flex: none; background: #f0f0f0; border-top: 1px solid #cfcfcf; display: flex; align-items: center; padding-left: 3px; color: #666;
`;
const Link = styled.a`
  color: #0a6ac8; text-decoration: underline; letter-spacing: -0.2px; width: 914px; flex: none;
`;
const StatusText = styled.div`
  flex: 0 0 ${(p) => p.$w}px; letter-spacing: -0.45px; white-space: nowrap;
`;
const StatBtn = styled.div`
  flex: 0 0 ${(p) => p.$w || 16}px; height: 21px; margin-left: ${(p) => p.$ml || 0}px; padding-left: ${(p) => p.$pl || 0}px;
  display: flex; align-items: center; justify-content: ${(p) => (p.$center ? "center" : "flex-start")}; gap: 3px;
  background: ${(p) => (p.$on ? "#d8d8d8" : "transparent")};
`;
const Floor = styled.div`
  height: 3px; flex: none; background: #222;
`;

/* ---------- data ---------- */
const qat = ["new", "docCheck", "docI", "docList", "docSwirl", "open", "save", "editDoc", "folderStar", "moveRed", "folderBlue", "undo", "redo", "ball", "tree", "film", "listDoc"];
const tabs = ["Menu", "Home", "Feature", "Sketch", "Surface", "Assembly", "Sheet Metal", "Welding", "Tools", "Smart Markup", "Visualization", "Annotation", "Common", "Add-Ins"];
const strip2 = ["folderY", "saveB", "folderCube", "sheetX", "pages", "gearG", "tableB", "tableG", "folderCar", "greenBlue", "docBlue", "picture", "clip", "docPen"];

const Tree = () => (
  <TreeBox>
    <TreeRow><Ic n="scene" s={17} /><TreeLabel>Scene2</TreeLabel></TreeRow>
    <TreeRow><Cell $v="start" $h><Expander /></Cell><Ic n="axes" s={17} /><TreeLabel>Global Coordinate System</TreeLabel></TreeRow>
    <TreeRow><Cell $v="full" $h><Expander $open /></Cell><Ic n="part" s={17} /><TreeLabel>Part2</TreeLabel></TreeRow>
    {[["treeBlock", "Block", false], ["treeBlend", "Blend3", true], ["treeH", "H Block", false], ["treeH", "H Cylinder", false], ["treeH", "H Cylinder", false]].map(([ic, label, leaf], i) => (
      <TreeRow key={i}>
        <Cell $v="full" />
        <Cell $v={i === 4 ? "end" : "full"} $h>{!leaf && <Expander />}</Cell>
        <Ic n={ic} s={17} />
        <TreeLabel>{label}</TreeLabel>
      </TreeRow>
    ))}
    <TreeRow><Cell $v="full" $h><Expander /></Cell><Ic n="cameras" s={17} /><TreeLabel>Cameras</TreeLabel></TreeRow>
    <TreeRow><Cell $v="end" $h><Expander /></Cell><Ic n="lights" s={17} /><TreeLabel>Lights</TreeLabel></TreeRow>
  </TreeBox>
);

const Part = () => (
  <PartSvg viewBox="0 0 1568 1568" preserveAspectRatio="none">
    <defs>
      <linearGradient id="roll" gradientUnits="userSpaceOnUse" x1="320" y1="188" x2="389" y2="286">
        <stop offset="0" stopColor="#cdc2b6" /><stop offset=".35" stopColor="#fdfaf6" /><stop offset=".62" stopColor="#d4c9be" /><stop offset="1" stopColor="#a3978b" />
      </linearGradient>
      <linearGradient id="bore" gradientUnits="userSpaceOnUse" x1="170" y1="500" x2="350" y2="760">
        <stop offset="0" stopColor="#a99d91" /><stop offset=".15" stopColor="#93877b" /><stop offset=".48" stopColor="#ddd5cc" /><stop offset=".62" stopColor="#cfc6bc" /><stop offset=".8" stopColor="#8e8378" /><stop offset=".92" stopColor="#f4eee7" /><stop offset="1" stopColor="#b8ada1" />
      </linearGradient>
      <linearGradient id="end1" gradientUnits="userSpaceOnUse" x1="1060" y1="0" x2="1562" y2="0">
        <stop offset="0" stopColor="#918579" /><stop offset=".45" stopColor="#ada398" /><stop offset=".72" stopColor="#8d8177" /><stop offset="1" stopColor="#a99d91" />
      </linearGradient>
      <linearGradient id="end2" gradientUnits="userSpaceOnUse" x1="1010" y1="0" x2="1512" y2="0">
        <stop offset="0" stopColor="#918579" /><stop offset=".42" stopColor="#ada398" /><stop offset=".72" stopColor="#8d8177" /><stop offset="1" stopColor="#a99d91" />
      </linearGradient>
      <linearGradient id="pin1" gradientUnits="userSpaceOnUse" x1="1170" y1="0" x2="1366" y2="0">
        <stop offset="0" stopColor="#85796e" /><stop offset=".5" stopColor="#c2b8ad" /><stop offset="1" stopColor="#85796e" />
      </linearGradient>
      <linearGradient id="pin2" gradientUnits="userSpaceOnUse" x1="1120" y1="0" x2="1316" y2="0">
        <stop offset="0" stopColor="#85796e" /><stop offset=".5" stopColor="#c2b8ad" /><stop offset="1" stopColor="#85796e" />
      </linearGradient>
    </defs>
    <g stroke="#161616" strokeWidth="1" strokeLinejoin="round">
      <path fill="url(#roll)" d="M140 315 500 60 555 47 620 60 672 87 308 343 250 315 190 307Z" />
      <path fill="#a3978b" d="M672 87 308 343 1085 840 1150 870 1220 895 1290 907 1370 903 1440 885 1500 845 1540 800 1562 750 1558 690 1530 640 1480 595 1420 560Z" />
      <ellipse fill="url(#pin1)" cx="1268" cy="712" rx="98" ry="65" transform="rotate(8 1268 712)" />
      <path fill="#8f8378" d="M308 343 250 315 190 307 140 315 95 345 60 390 38 450 30 530 35 600 60 700 110 800 170 880 240 940 1010 1428 1032 1235 535 915 558 718 1060 1035 1085 840Z" />
      <path fill="#97897e" d="M558 718 690 800 535 915Z" />
      <path fill="#a3978b" d="M690 800 535 915 1032 1235 1100 1275 1160 1295 1230 1303 1300 1300 1380 1285 1450 1250 1500 1200 1512 1150 1505 1090 1485 1055 1420 1085 1350 1100 1290 1103 1220 1095 1150 1075 1060 1035Z" />
      <ellipse fill="url(#pin2)" cx="1218" cy="1105" rx="98" ry="65" transform="rotate(8 1218 1105)" />
      <path fill="url(#end1)" d="M1085 840 1150 870 1220 895 1290 907 1370 903 1440 885 1500 845 1540 800 1562 750 1535 960 1510 1020 1480 1055 1420 1085 1350 1100 1290 1103 1220 1095 1150 1075 1060 1035Z" />
      <path fill="url(#end2)" d="M1032 1235 1100 1275 1160 1295 1230 1303 1300 1300 1380 1285 1450 1250 1500 1200 1512 1150 1485 1350 1470 1410 1420 1460 1340 1490 1260 1498 1190 1495 1100 1470 1010 1428Z" />
      <path fill="url(#bore)" d="M215 473 250 475 300 505 345 560 375 620 385 680 375 740 345 785 305 800 260 785 205 730 160 665 148 590 160 525 185 490Z" />
    </g>
  </PartSvg>
);

const Axes = () => (
  <Triad viewBox="0 0 62 44">
    <path d="M34 33 32 30 18 22 15 24 30 35Z" fill="#2a9a30" />
    <path d="M34 34 38 28 46 23 44 29 36 36Z" fill="#c04048" />
    <path d="M33 33V24L30 24 36 14 40 24 37 24V33Z" fill="#6a6ad8" />
    <text x="36" y="11" fontFamily={font} fontSize="9" fontWeight="700" fill="#1a1ae0">Z</text>
    <text x="10" y="22" fontFamily={font} fontSize="9" fill="#30e030">Y</text>
    <text x="49" y="23" fontFamily={font} fontSize="9" fill="#f02030">X</text>
  </Triad>
);

export default function App() {
  return (
    <Shell>
      <Global />
      <TitleBar>
        <Qat>
          <QatSlot><Ic n="logo" /></QatSlot>
          {qat.map((n, i) => <QatSlot key={i} $ml={i === 0 ? 3 : 0} $on={n === "tree" || n === "film"}><Ic n={n} s={18} /></QatSlot>)}
          <QatSlot><Ic n="copies" s={18} /></QatSlot>
          <Caret $c="#fff" $m="0 0 0 -5px" />
          <Caret $c="#fff" $m="0 0 0 1px" />
        </Qat>
        <Title>IRONCAD 2018 (NFR) - [Scene2*]</Title>
        <Orb />
        <WinBtns $gap={26} $pr={11} $pb={5}>
          <WinGlyph kind="min" /><WinGlyph kind="max" /><WinGlyph kind="x" />
        </WinBtns>
      </TitleBar>

      <TabBar>
        {tabs.map((t) => <Tab key={t} $on={t === "Feature"}>{t}</Tab>)}
        <TabRight>
          Styles<Caret $c="#fff" $m="0 0 2px 8px" />
          <HelpBadge>?</HelpBadge>
          <Caret $c="#fff" $m="0 0 2px 8px" />
          <WinBtns $gap={8} $pr={4} $ml="6px">
            <WinGlyph kind="min" /><WinGlyph kind="max" /><WinGlyph kind="x" />
          </WinBtns>
        </TabRight>
      </TabBar>

      <Ribbon>
        <Group $w={67}>
          <GroupBody $c>
            <LargeBtn $w={66}><Big n="datum" /><LargeText>Datum<br />Plane <InlineCaret /></LargeText></LargeBtn>
          </GroupBody>
          <GroupLabel>Reference</GroupLabel>
        </Group>
        <Group $w={252}>
          <GroupBody $pl={3}>
            <LargeBtn $w={54}><Big n="extrude" /><LargeText>Extrude<br />Wizard <InlineCaret /></LargeText></LargeBtn>
            <Col $w={97}>
              <Small i="spin" t="Spin Wizard" arrow />
              <Small i="sweep" t={<><u>S</u>weep</>} arrow />
              <Small i="loft" t={<><u>L</u>oft</>} arrow />
            </Col>
            <Col $w={97}>
              <Small i="thread" t="Thread" />
              <Small i="thicken" t="Thicken" />
              <Small i="hole" t="Custom Hole" />
            </Col>
          </GroupBody>
          <GroupLabel>Feature</GroupLabel>
        </Group>
        <Group $w={106}>
          <GroupBody $c>
            <LargeBtn $w={100}><Big n="quick" /><LargeText>Quick<br />Block <InlineCaret /></LargeText></LargeBtn>
          </GroupBody>
          <GroupLabel>Quick Pick Shapes</GroupLabel>
        </Group>
        <Group $w={408}>
          <GroupBody $pl={5}>
            <LargeBtn $w={46}><Big n="blend" /><LargeText><u>B</u>lend<br />Edges</LargeText></LargeBtn>
            <LargeBtn $w={46}><Big n="chamfer" /><LargeText><u>C</u>hamfer<br />Edges</LargeText></LargeBtn>
            <Col $w={85} $ml={5}>
              <Small i="draft" t={<>D<u>r</u>aft Faces</>} />
              <Small i="shell" t="Shell Part" />
              <Small i="bool" t="Boolean" />
            </Col>
            <Col $w={143}>
              <Small i="split" t="Split" />
              <Small i="stretch" t="Stretch Part/Assembly" off />
              <Small i="delBody" t="Delete Body" off />
            </Col>
            <Col $w={77}>
              <Small i="rib" t="Rib" />
              <Small i="trim" t={<><u>T</u>rim</>} />
              <Small i="emboss" t={<><u>E</u>mboss</>} arrow />
            </Col>
          </GroupBody>
          <GroupLabel>Modify</GroupLabel>
        </Group>
        <Group $w={163}>
          <GroupBody $pl={3}>
            <LargeBtn $w={48}><Big n="pattern" /><LargeText>Pattern<br />Feature</LargeText></LargeBtn>
            <Col $w={110}>
              <Small i="scale" t="Scale Body" />
              <Small i="copyBody" t="Copy Body" off />
              <Small i="mirror" t={<><u>M</u>irror Feature</>} arrow />
            </Col>
          </GroupBody>
          <GroupLabel>Transform</GroupLabel>
        </Group>
        <Group $w={209}>
          <GroupBody $pl={9}>
            <Col $w={87}>
              <Small i="moveF" t={<>Mo<u>v</u>e Face</>} />
              <Small i="matchF" t={<><u>M</u>atch Face</>} />
              <Small i="offsetF" t={<><u>O</u>ffset Face</>} />
            </Col>
            <Col $w={110}>
              <Small i="delF" t={<><u>D</u>elete Face</>} />
              <Small i="radiusF" t="Edit Face Radius" off />
              <Small i="splitF" t={<>Split <u>F</u>aces</>} />
            </Col>
          </GroupBody>
          <GroupLabel>Direct Edit</GroupLabel>
        </Group>
      </Ribbon>

      <Strip>
        <StripLeft>
          <Grip />
          <StripBtn $ml={4}><Ic n="runCursor" /></StripBtn>
          <StripBtn $on><Ic n="cursor" /></StripBtn>
          <StripBtn><Ic n="boxCursor" /></StripBtn>
          <Combo $w={146} $off $ml={2}>Default<Caret $c="#bbb" /></Combo>
          <Combo $w={144} $ml={5}>Any<Caret $c="#777" /></Combo>
          <Combo $w={146} $ml={5}>Default<Caret $c="#777" /></Combo>
        </StripLeft>
        <StripRight>
          <Grip $m="0 5px 0 1px" />
          {strip2.map((n, i) => <StripBtn key={i}><Ic n={n} s={17} /></StripBtn>)}
          <Caret $m="4px 0 0 0" />
        </StripRight>
      </Strip>

      <DocTabs>
        <DocTabWrap>
          <DocTab>Scene2*<DocClose><WinGlyph kind="x" s={10} c="#444" /></DocClose></DocTab>
        </DocTabWrap>
        <EndTri />
      </DocTabs>

      <Work>
        <Dock>
          <Rail>
            <RailGrip />
            <RailBtn><Ic n="g1" /></RailBtn>
            <RailBtn><Ic n="g2" /></RailBtn>
            <RailSep $h={7} />
            <RailBtn><Ic n="g3" /></RailBtn>
            <RailBtn><Ic n="g3" /></RailBtn>
            <RailBtn><Ic n="g4" /></RailBtn>
            <RailMore />
            <RailGrip />
            {["cFront", "cTop", "cLeft", "cRight", "cBack", "cBottom", "t1", "t2", "t3", "t4"].map((n) => <RailBtn key={n}><Ic n={n} /></RailBtn>)}
            <RailMore />
            <RailGrip />
            {["dim", "dimH", "dimV", "ang", "rad", "dia"].map((n) => <RailBtn key={n}><Ic n={n} /></RailBtn>)}
            <RailSep $h={8} />
            <RailBtn><Ic n="leader" /></RailBtn>
            <RailBtn><Ic n="hatch" /></RailBtn>
            <RailMore />
          </Rail>
          <Panel>
            <PanelHead>
              Scene
              <HeadIcons>
                <HeadCaret $c="#666" />
                <Svg $s={11} viewBox="0 0 11 11" fill="none" stroke="#555"><path d="M3 1H8M4 1V6H7V1M2 6.5H9M5.5 6.5V10.5" /></Svg>
                <Svg $s={10} viewBox="0 0 10 10" fill="none" stroke="#444" strokeWidth="1.2"><path d="M1 1 9 9M9 1 1 9" /></Svg>
              </HeadIcons>
            </PanelHead>
            <SearchRow>
              <SearchBox>Search ...</SearchBox>
              <XBtn><Svg $s={14} viewBox="0 0 14 14" fill="none" stroke="#d41c1c" strokeWidth="1.8"><path d="M1 1 13 13M13 1 1 13" /></Svg></XBtn>
              <Ic n="tree" s={18} />
            </SearchRow>
            <Tree />
            <PanelTabs>
              <PTab $on $g={1}><Ic n="sceneTab" s={17} />Scene</PTab>
              <PTab $ml={5} $g={2}><Ic n="search" />Search</PTab>
              <PTab $ml={11} $g={2}><Ic n="props" />Properties</PTab>
            </PanelTabs>
          </Panel>
        </Dock>
        <View>
          <Part />
          <Axes />
        </View>
      </Work>

      <Catalog>
        <CatalogRow><Ic n="catalog" />Catalog Browser</CatalogRow>
        <CatalogBar />
      </Catalog>

      <Status>
        <Link href="#">http://www.ironcad.com</Link>
        <StatusText $w={137}>View size: 1433 x&nbsp; 746</StatusText>
        <StatusText $w={90}>Units: in, deg</StatusText>
        <StatBtn $ml={1}><Ic n="zoomAll" /></StatBtn>
        <StatBtn $ml={8} $w={25}><Ic n="zoomP" /><Caret /></StatBtn>
        <StatBtn $ml={9} $w={25}><Ic n="cubeStar" /><Caret /></StatBtn>
        <StatBtn $ml={11} $w={25}><Ic n="viewCube" /><Caret /></StatBtn>
        <StatBtn $ml={11} $w={25}><Ic n="cam" /><Caret /></StatBtn>
        <StatBtn $ml={8}><Ic n="slab" /></StatBtn>
        <StatBtn $ml={9} $w={25}><Ic n="glasses" /><Caret /></StatBtn>
        <StatBtn $on $ml={4} $w={31} $pl={1}><Ic n="cubeSel" /><Caret /></StatBtn>
        <StatBtn $ml={5} $w={25}><Ic n="part2" /><Caret /></StatBtn>
        <StatBtn $ml={6}><Ic n="runCursor2" /></StatBtn>
        <StatBtn $on $center $ml={7} $w={23}><Ic n="cursor" /></StatBtn>
        <StatBtn $ml={2}><Ic n="boxCursor" /></StatBtn>
        <Combo $w={88} $h={20} $ml={7}>Any<Caret $c="#777" /></Combo>
        <Combo $w={64} $h={20} $ml={3}>Default<Caret $c="#777" /></Combo>
        <StatBtn $ml={4}><Ic n="net" /></StatBtn>
      </Status>
      <Floor />
    </Shell>
  );
}
